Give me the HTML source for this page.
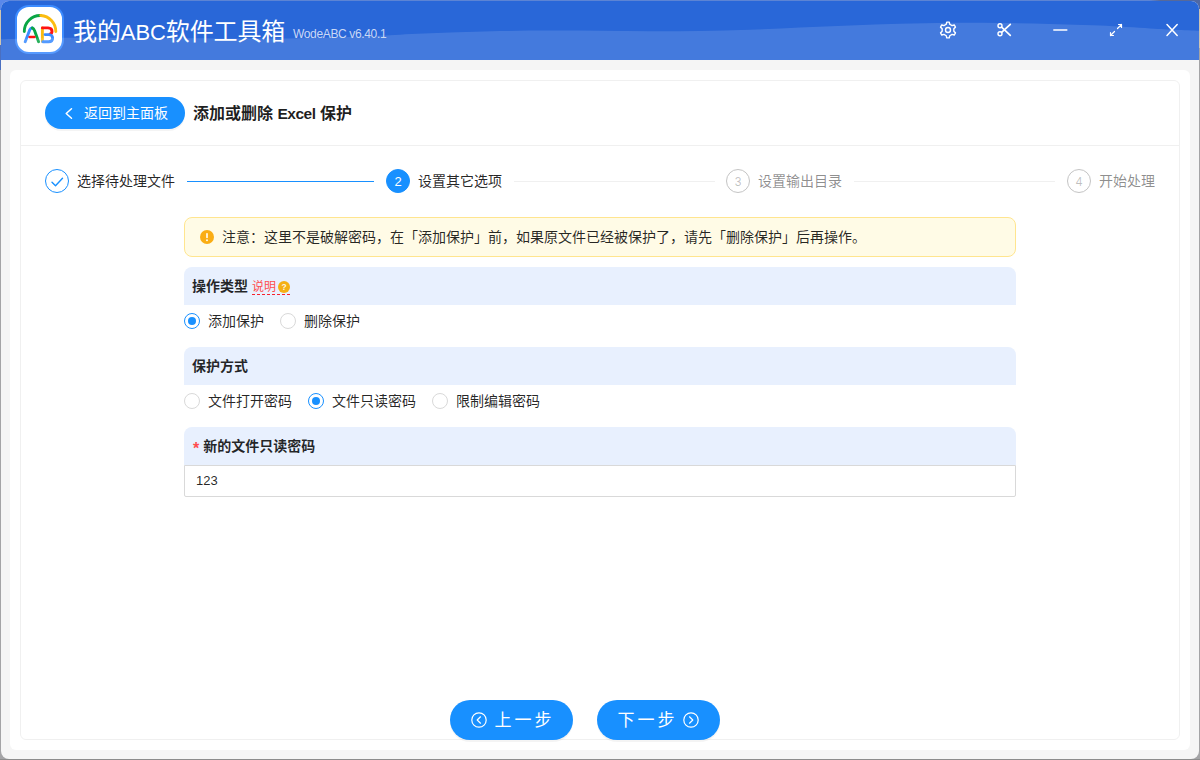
<!DOCTYPE html>
<html lang="zh-CN">
<head>
<meta charset="utf-8">
<title>我的ABC软件工具箱</title>
<style>
*{box-sizing:border-box;margin:0;padding:0}
html,body{width:1200px;height:760px;overflow:hidden}
body{position:relative;background:#a4a4a6;font-family:"Liberation Sans","Noto Sans CJK SC",sans-serif;color:rgba(0,0,0,.85);font-size:14px}
.abs{position:absolute}
#win{position:absolute;left:1px;top:1px;width:1198px;height:758px;border-radius:8px;background:#f5f5f5;overflow:hidden}
#hdr{position:absolute;left:0;top:0;width:1198px;height:59px;background:#2967d8}
#hdr svg.wave{position:absolute;left:0;top:0}
#logo{position:absolute;left:14px;top:4px;width:49px;height:49px;border-radius:14px;background:#fff;border:2px solid #3d8cff}
#apptitle{letter-spacing:-.1px;position:absolute;left:72px;top:14px;font-size:24px;line-height:34px;color:#fff;white-space:nowrap}
#ver{position:absolute;left:292px;top:25px;font-size:12px;line-height:16px;color:#c9d8f5;white-space:nowrap;letter-spacing:-.35px}
#panel{position:absolute;left:9px;top:69px;width:1180px;height:680px;background:#fff;border-radius:6px}
#card{position:absolute;left:19px;top:79px;width:1160px;height:660px;background:#fff;border:1px solid #f0f0f0;border-radius:6px}
#back{box-shadow:0 2px 0 rgba(0,0,0,.045);position:absolute;left:44px;top:96px;width:140px;height:32px;border-radius:16px;background:#1890ff;color:#fff;font-size:14px;line-height:32px;white-space:nowrap}
#back span{position:absolute;left:39px;top:0}
#ptitle{position:absolute;left:192px;top:101px;font-size:16px;line-height:24px;font-weight:bold;white-space:nowrap;color:rgba(0,0,0,.88)}
#div1{position:absolute;left:20px;top:144px;width:1158px;height:1px;background:#f0f0f0}
.sic{position:absolute;top:168px;width:24px;height:24px;border-radius:50%;border:1px solid #1890ff;font-size:12px;line-height:22px;text-align:center}
.stx{position:absolute;top:169px;font-size:14px;line-height:22px;white-space:nowrap}
.sln{position:absolute;top:180px;height:1px}
#alert{position:absolute;left:183px;top:216px;width:832px;height:40px;background:#fffbe6;border:1px solid #ffe58f;border-radius:8px}
#alert .t{position:absolute;left:37px;top:8px;font-size:14px;line-height:22px;white-space:nowrap}
.sec{position:absolute;left:183px;width:832px;height:38px;background:#e8f0fe;border-radius:8px 8px 0 0;font-weight:bold;font-size:14px;line-height:38px;padding-left:8px;white-space:nowrap}
.rad{position:absolute;width:16px;height:16px;border-radius:50%;border:1px solid #d9d9d9;background:#fff}
.rad.on{border-color:#1890ff}
.rad.on:after{content:"";position:absolute;left:3px;top:3px;width:8px;height:8px;border-radius:50%;background:#1890ff}
.rl{position:absolute;font-size:14px;line-height:22px;white-space:nowrap}
#inp{position:absolute;left:183px;top:464px;width:832px;height:32px;border:1px solid #d9d9d9;background:#fff;border-radius:0 0 2px 2px;font-size:13px;line-height:30px;padding-left:11px}
.btn{box-shadow:0 2px 0 rgba(0,0,0,.045);position:absolute;top:699px;width:123px;height:40px;border-radius:20px;background:#1890ff;color:#fff;font-size:17px;line-height:40px;letter-spacing:3px;white-space:nowrap}
</style>
</head>
<body>
<div class="abs" style="left:0;top:0;width:1200px;height:1px;background:linear-gradient(90deg,#5c87e0 0,#5c84d4 30px,#5c84d4 1150px,#56699a 1160px)"></div>
<div class="abs" style="left:0;top:1px;width:1px;height:9px;background:#5a88ea"></div>
<div class="abs" style="left:0;top:10px;width:1px;height:35px;background:#cfc5b0"></div>
<div class="abs" style="left:0;top:45px;width:1px;height:25px;background:#4a6fc0"></div>
<div class="abs" style="left:1199px;top:8px;width:1px;height:40px;background:#cdc4b4"></div>
<div class="abs" style="left:0;top:759px;width:1200px;height:1px;background:#8c8c8c"></div>
<div class="abs" style="left:0;top:0;width:9px;height:9px;background:#5a88ea"></div>
<div class="abs" style="left:1191px;top:0;width:9px;height:9px;background:#4f68a4"></div>
<div id="win">
  <div id="hdr">
    <div id="logo">
      <svg width="45" height="45" viewBox="17 7 45 45" style="position:absolute;left:0;top:0" fill="none" stroke-width="2.900" stroke-linecap="round" stroke-linejoin="round">
        <path d="M24.300 31.500A15.800 16 0 0 1 40.800 15.520" stroke="#0aa645"/>
        <path d="M40.800 15.520A15.800 16 0 0 1 55.800 31.500" stroke="#fbbc10"/>
        <path d="M25.200 41.700L29.700 29.900Q30.800 27.700 32.300 28" stroke="#3a8cff"/>
        <path d="M32.300 28Q33.700 28.300 34.700 31L38.600 41.700" stroke="#0aa645"/>
        <path d="M29.600 37H34.400" stroke="#ff1111" stroke-width="2.600"/>
        <path d="M42.400 28V41.600" stroke="#fbbc10"/>
        <path d="M42.400 27.900H48Q52 28.100 52 31.200Q52 33.400 50 34.200" stroke="#ff1111"/>
        <path d="M45 34.600H49Q52.600 34.800 52.600 38.200Q52.600 41.700 48.600 41.700H42.800" stroke="#3a8cff"/>
      </svg>
    </div>
    <svg class="wave" width="1198" height="59" viewBox="1 1 1198 59"><path d="M0 39.3C5.8 39.13 23.3 38.57 35 38.3C46.7 38.03 54.2 37.77 70 37.7C85.8 37.63 110.0 37.80 130 37.9C150.0 38.00 170.0 38.18 190 38.3C210.0 38.42 233.3 38.58 250 38.6C266.7 38.62 276.7 38.58 290 38.4C303.3 38.22 317.5 37.85 330 37.5C342.5 37.15 353.3 36.77 365 36.3C376.7 35.83 385.8 35.32 400 34.7C414.2 34.08 433.3 33.20 450 32.6C466.7 32.00 483.3 31.43 500 31.1C516.7 30.77 533.3 30.65 550 30.6C566.7 30.55 583.3 30.68 600 30.8C616.7 30.92 633.3 31.27 650 31.3C666.7 31.33 683.3 31.25 700 31C716.7 30.75 733.3 30.38 750 29.8C766.7 29.22 783.3 28.23 800 27.5C816.7 26.77 833.3 26.03 850 25.4C866.7 24.77 883.3 24.15 900 23.7C916.7 23.25 933.3 22.83 950 22.7C966.7 22.57 983.3 22.70 1000 22.9C1016.7 23.10 1033.3 23.45 1050 23.9C1066.7 24.35 1083.3 24.85 1100 25.6C1116.7 26.35 1137.5 27.72 1150 28.4C1162.5 29.08 1166.7 29.30 1175 29.7C1183.3 30.10 1195.8 30.62 1200 30.8V61H0Z" fill="#ffffff" fill-opacity=".13"/></svg>
    <div id="apptitle">我的<span style="font-size:22px">ABC</span>软件工具箱</div>
    <div id="ver">WodeABC v6.40.1</div>
    <svg class="abs" style="left:937px;top:19px" width="20" height="20" viewBox="0 0 20 20" fill="none" stroke="#fff" stroke-width="1.4" stroke-linejoin="round"><circle cx="10" cy="10" r="2.500"/><path d="M8.240 4.260L8.750 2.100L11.250 2.100L11.760 4.260L14.090 5.610L16.220 4.970L17.470 7.130L15.850 8.650L15.850 11.350L17.470 12.870L16.220 15.030L14.090 14.390L11.760 15.740L11.250 17.900L8.750 17.900L8.240 15.740L5.910 14.390L3.780 15.030L2.530 12.870L4.150 11.350L4.150 8.650L2.530 7.130L3.780 4.970L5.910 5.610Z"/></svg>
    <svg class="abs" style="left:995px;top:20px" width="16" height="16" viewBox="0 0 16 16" fill="none" stroke="#fff" stroke-linecap="round"><circle cx="4" cy="4.800" r="2" stroke-width="1.400"/><circle cx="4" cy="12.750" r="2" stroke-width="1.400"/><path d="M5.600 6.200L14.300 14.300M5.600 11.400L14.300 3.300" stroke-width="1.700"/></svg>
    <svg class="abs" style="left:1050px;top:22px" width="18" height="14" viewBox="0 0 18 14" stroke="#fff" stroke-width="1.500" stroke-linecap="round"><path d="M2.800 7H15.800"/></svg>
    <svg class="abs" style="left:1107px;top:21px" width="16" height="16" viewBox="0 0 16 16" fill="none" stroke="#fff" stroke-width="1.2" stroke-linecap="round" stroke-linejoin="round"><path d="M9.500 6.500L13.500 2.500M10.500 2.500h3v3M6.500 9.500L2.500 13.500M2.500 10.500v3h3"/></svg>
    <svg class="abs" style="left:1164px;top:22px" width="14" height="14" viewBox="0 0 14 14" fill="none" stroke="#fff" stroke-width="1.5" stroke-linecap="round"><path d="M2 1.500L12.200 12.500M12.200 1.500L2 12.500"/></svg>
  </div>

  <div id="panel"></div>
  <div id="card"></div>

  <div id="back"><svg class="abs" style="left:18px;top:10px" width="10" height="13" viewBox="0 0 10 13" fill="none" stroke="#fff" stroke-width="1.500" stroke-linecap="round" stroke-linejoin="round"><path d="M8.500 1.700L3.200 6.500L8.500 11.300"/></svg><span>返回到主面板</span></div>
  <div id="ptitle">添加或删除 <span style="font-size:15.500px;letter-spacing:-.5px">Excel</span> 保护</div>
  <div id="div1"></div>

  <div class="sic" style="left:44px"><svg width="22" height="22" viewBox="0 0 22 22" fill="none" stroke="#1890ff" stroke-width="1.400" stroke-linecap="round" stroke-linejoin="round"><path d="M6 12.200L9.500 15.700L16.500 8.200"/></svg></div>
  <div class="stx" style="left:76px">选择待处理文件</div>
  <div class="sln" style="left:186px;width:187px;background:#1890ff"></div>

  <div class="sic" style="left:385px;background:#1890ff;color:#fff;font-size:13px;line-height:24px">2</div>
  <div class="stx" style="left:417px">设置其它选项</div>
  <div class="sln" style="left:513px;width:201px;background:#f0f0f0"></div>

  <div class="sic" style="left:725px;border-color:#c4c4c4;color:rgba(0,0,0,.25);line-height:25px">3</div>
  <div class="stx" style="left:757px;color:rgba(0,0,0,.45)">设置输出目录</div>
  <div class="sln" style="left:853px;width:201px;background:#f0f0f0"></div>

  <div class="sic" style="left:1066px;border-color:#c4c4c4;color:rgba(0,0,0,.25);line-height:25px">4</div>
  <div class="stx" style="left:1098px;color:rgba(0,0,0,.45)">开始处理</div>

  <div id="alert">
    <svg class="abs" style="left:15px;top:12px" width="14" height="14" viewBox="0 0 14 14"><circle cx="7" cy="7" r="7" fill="#faad14"/><rect x="6.200" y="3" width="1.600" height="5.200" rx=".8" fill="#fff"/><circle cx="7" cy="10.200" r=".95" fill="#fff"/></svg>
    <div class="t">注意：这里不是破解密码，在「添加保护」前，如果原文件已经被保护了，请先「删除保护」后再操作。</div>
  </div>

  <div class="sec" style="top:266px">操作类型 <span style="font-weight:normal;font-size:12px;color:#ff4d4f;border-bottom:1px dashed #f5222d;padding-bottom:0;padding-right:14px">说明</span><svg class="abs" style="left:94px;top:14px" width="12" height="12" viewBox="0 0 12 12"><circle cx="6" cy="6" r="6" fill="#f5b014"/><text x="6" y="9.200" font-size="8.500" font-weight="bold" text-anchor="middle" fill="#fff" fill-opacity=".9" font-family="Liberation Sans, sans-serif">?</text></svg></div>
  <div class="rad on" style="left:183px;top:312px"></div><div class="rl" style="left:207px;top:309px">添加保护</div>
  <div class="rad" style="left:279px;top:312px"></div><div class="rl" style="left:303px;top:309px">删除保护</div>

  <div class="sec" style="top:346px">保护方式</div>
  <div class="rad" style="left:183px;top:392px"></div><div class="rl" style="left:207px;top:389px">文件打开密码</div>
  <div class="rad on" style="left:307px;top:392px"></div><div class="rl" style="left:331px;top:389px">文件只读密码</div>
  <div class="rad" style="left:431px;top:392px"></div><div class="rl" style="left:455px;top:389px">限制编辑密码</div>

  <div class="sec" style="top:426px"><span style="color:#ff4d4f;font-weight:bold;font-size:16px;margin-right:5px;position:relative;top:3px;left:1px">*</span>新的文件只读密码</div>
  <div id="inp">123</div>

  <div class="btn" style="left:449px"><svg class="abs" style="left:21px;top:12px" width="16" height="16" viewBox="0 0 16 16" fill="none" stroke="#fff" stroke-width="1.200" stroke-linecap="round" stroke-linejoin="round"><circle cx="8" cy="8" r="7.200"/><path d="M9.500 4.800L6.200 8L9.500 11.200"/></svg><span class="abs" style="left:44.500px;top:1px">上一步</span></div>
  <div class="btn" style="left:596px"><span class="abs" style="left:20.500px;top:1px">下一步</span><svg class="abs" style="left:86px;top:12px" width="16" height="16" viewBox="0 0 16 16" fill="none" stroke="#fff" stroke-width="1.200" stroke-linecap="round" stroke-linejoin="round"><circle cx="8" cy="8" r="7.200"/><path d="M6.500 4.800L9.800 8L6.500 11.200"/></svg></div>
</div>
</body>
</html>
